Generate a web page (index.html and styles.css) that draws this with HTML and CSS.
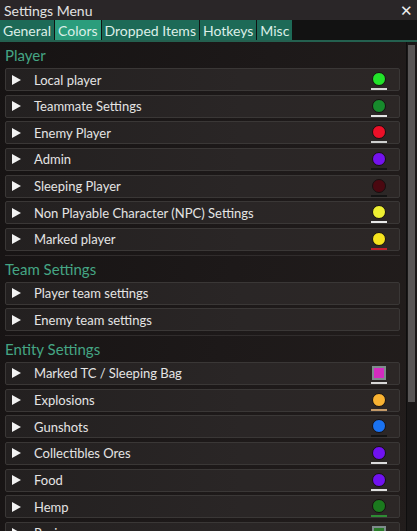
FILE: index.html
```html
<!DOCTYPE html>
<html lang="en">
<head>
    <meta charset="UTF-8">
    <title>Settings Menu</title>
    <link rel="stylesheet" href="styles.css">
</head>
<body>
    <div class="window">
        <div class="titlebar">
            <span>Settings Menu</span>
            <span class="close">&#x2715;</span>
        </div>
        <div class="tabs">
            <div class="tab">General</div>
            <div class="tab active">Colors</div>
            <div class="tab">Dropped Items</div>
            <div class="tab">Hotkeys</div>
            <div class="tab">Misc</div>
        </div>
        <div class="main">
            <div class="content">
                <h2 class="section">Player</h2>
                <div class="row"><span class="arrow"></span><span class="label">Local player</span><span class="swatch"><i class="dot" style="background:#22e32a"></i><b class="line" style="background:#d8d8d8"></b></span></div>
                <div class="row"><span class="arrow"></span><span class="label">Teammate Settings</span><span class="swatch"><i class="dot" style="background:#178a2c"></i><b class="line" style="background:#e4e4e4"></b></span></div>
                <div class="row"><span class="arrow"></span><span class="label">Enemy Player</span><span class="swatch"><i class="dot" style="background:#ec1028"></i><b class="line" style="background:#cfcfcf"></b></span></div>
                <div class="row"><span class="arrow"></span><span class="label">Admin</span><span class="swatch"><i class="dot" style="background:#7412ee"></i><b class="line" style="background:#151515"></b></span></div>
                <div class="row"><span class="arrow"></span><span class="label">Sleeping Player</span><span class="swatch"><i class="dot" style="background:#4a0810"></i><b class="line" style="background:#141414"></b></span></div>
                <div class="row"><span class="arrow"></span><span class="label">Non Playable Character (NPC) Settings</span><span class="swatch"><i class="dot" style="background:#eef032"></i><b class="line" style="background:#e8e8e8"></b></span></div>
                <div class="row"><span class="arrow"></span><span class="label">Marked player</span><span class="swatch"><i class="dot" style="background:#f6e41e"></i><b class="line" style="background:#c0202a"></b></span></div>
                <div class="sep"></div>

                <h2 class="section">Team Settings</h2>
                <div class="row"><span class="arrow"></span><span class="label">Player team settings</span></div>
                <div class="row"><span class="arrow"></span><span class="label">Enemy team settings</span></div>
                <div class="sep"></div>

                <h2 class="section">Entity Settings</h2>
                <div class="row"><span class="arrow"></span><span class="label">Marked TC / Sleeping Bag</span><span class="swatch"><i class="square" style="background:#d42cc0"></i><b class="line" style="background:#d8d8d8"></b></span></div>
                <div class="row"><span class="arrow"></span><span class="label">Explosions</span><span class="swatch"><i class="dot" style="background:#f8b232"></i><b class="line" style="background:#c49a68"></b></span></div>
                <div class="row"><span class="arrow"></span><span class="label">Gunshots</span><span class="swatch"><i class="dot" style="background:#1a72f0"></i><b class="line" style="background:#141414"></b></span></div>
                <div class="row"><span class="arrow"></span><span class="label">Collectibles Ores</span><span class="swatch"><i class="dot" style="background:#7012f0"></i><b class="line" style="background:#dcdcdc"></b></span></div>
                <div class="row"><span class="arrow"></span><span class="label">Food</span><span class="swatch"><i class="dot" style="background:#7012f0"></i><b class="line" style="background:#e0e0e0"></b></span></div>
                <div class="row"><span class="arrow"></span><span class="label">Hemp</span><span class="swatch"><i class="dot" style="background:#1b7a1e"></i><b class="line" style="background:#2e8c34"></b></span></div>
                <div class="row"><span class="arrow"></span><span class="label">Resin</span><span class="swatch"><i class="square" style="background:#2a7a2a"></i><b class="line" style="background:#2e8c34"></b></span></div>
            </div>
            <div class="scrollbar">
                <div class="thumb"></div>
            </div>
        </div>
    </div>
</body>
</html>
```

FILE: styles.css
```css
body {
    margin: 0;
    background: #141212;
    font-family: Lato, "Noto Sans", sans-serif;
    color: #e6e6e6;
}

.window {
    width: 417px;
    height: 531px;
    overflow: hidden;
    display: flex;
    flex-direction: column;
    background: linear-gradient(100deg, #161313 0%, #1d1919 55%, #221d1c 100%);
}

.titlebar {
    height: 20px;
    flex-shrink: 0;
    display: flex;
    justify-content: space-between;
    align-items: center;
    padding: 0 4px;
    background: #2a2628;
    font-size: 14px;
    color: #e2e2e2;
}

.close {
    font-size: 15px;
    color: #ececec;
}

.tabs {
    height: 20px;
    flex-shrink: 0;
    display: flex;
    gap: 1px;
    background: #121212;
    border-bottom: 2px solid #24604f;
}

.tab {
    padding: 0 3px;
    display: flex;
    align-items: center;
    font-size: 14px;
    color: #dcefe8;
    background: #1d6a57;
}

.tab.active {
    background: #2b9d7c;
}

.main {
    flex: 1;
    display: flex;
    min-height: 0;
}

.content {
    flex: 1;
    padding: 2px 6px 0 5px;
    overflow: hidden;
}

.section {
    margin: 0;
    height: 24px;
    line-height: 23px;
    font-size: 15px;
    font-weight: normal;
    color: #45a584;
}

.row {
    height: 23px;
    box-sizing: border-box;
    margin-bottom: 3.67px;
    display: flex;
    align-items: center;
    border: 1px solid #3a3736;
    border-radius: 2px;
    background: linear-gradient(90deg, #232020 0%, #2a2626 60%, #2c2726 100%);
    font-size: 13px;
}

.arrow {
    width: 0;
    height: 0;
    margin: 0 13px 0 6px;
    border-top: 5px solid transparent;
    border-bottom: 5px solid transparent;
    border-left: 9px solid #f2f2f2;
}

.label {
    flex: 1;
    color: #e4e4e4;
}

.swatch {
    width: 16px;
    margin-right: 12px;
    display: flex;
    flex-direction: column;
    align-items: center;
    gap: 2px;
    padding-top: 3px;
}

.dot {
    width: 12px;
    height: 12px;
    border-radius: 50%;
    border: 1px solid #161010;
}

.square {
    width: 10px;
    height: 10px;
    border: 2px solid #7e8c8c;
}

.line {
    width: 16px;
    height: 2px;
}

.sep {
    height: 1px;
    margin: 0 0 2px;
    background: #302c2c;
}

.scrollbar {
    width: 10px;
    flex-shrink: 0;
    padding: 3px 0 0 0;
    background: #1a1818;
    border-left: 1px solid #0e0e0e;
}

.thumb {
    width: 7px;
    height: 357px;
    margin-left: 1px;
    background: #585656;
}
```
